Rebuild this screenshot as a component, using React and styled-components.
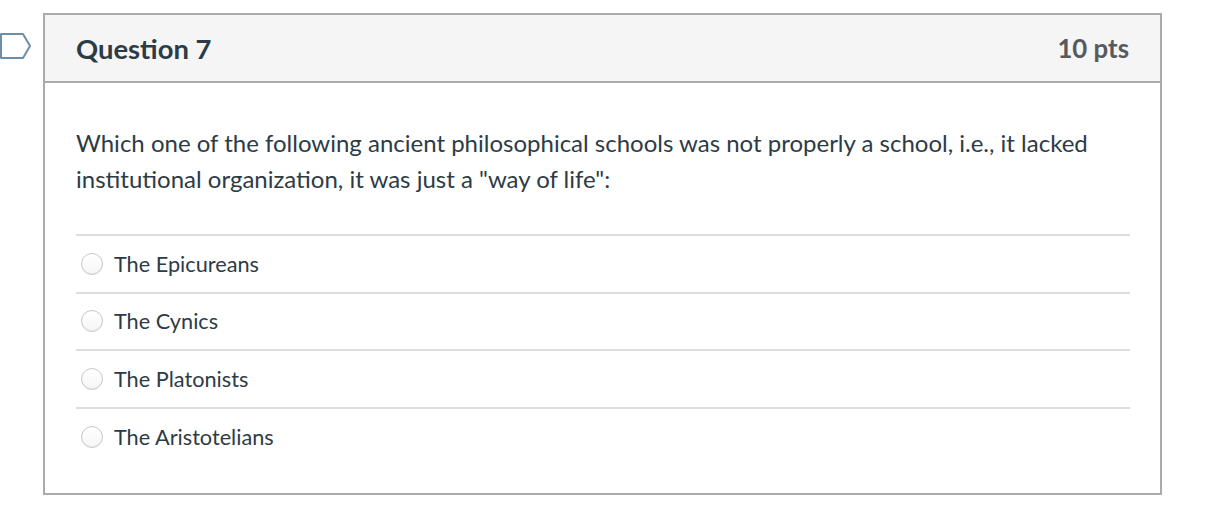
import React from "react";
import styled, { createGlobalStyle } from "styled-components";

const GlobalStyle = createGlobalStyle`
  body {
    margin: 0;
    background: #fff;
    font-family: Lato, "Open Sans", "Liberation Sans", sans-serif;
    color: #2d3b45;
  }
`;

const Page = styled.div`
  display: flex;
  align-items: flex-start;
  padding-top: 13px;
  width: 1220px;
`;

const Marker = styled.div`
  width: 43px;
  flex: 0 0 43px;
  padding-top: 20px;
  svg {
    display: block;
  }
`;

const Card = styled.div`
  width: 1115px;
  border: 2px solid #aaaaaa;
`;

const Header = styled.div`
  display: flex;
  align-items: center;
  justify-content: space-between;
  height: 66px;
  padding: 0 31px;
  background: #f5f5f5;
  border-bottom: 2px solid #aaaaaa;
`;

const Title = styled.h2`
  margin: 0;
  font-size: 27.4px;
  font-weight: 700;
  color: #2d3b45;
`;

const Points = styled.span`
  font-size: 25.8px;
  font-weight: 700;
  color: #555a5e;
`;

const Body = styled.div`
  padding: 42px 30px 29px 31px;
`;

const QuestionText = styled.p`
  margin: 0 0 37px;
  font-size: 24px;
  line-height: 36px;
`;

const Answers = styled.div`
  display: flex;
  flex-direction: column;
`;

const Answer = styled.label`
  display: flex;
  align-items: center;
  height: 55.6px;
  border-top: 2px solid #dddddd;
  padding-left: 5px;
  font-size: 21.7px;
  cursor: pointer;
`;

const Radio = styled.span`
  width: 20px;
  height: 20px;
  border-radius: 50%;
  border: 1px solid #c4c9cc;
  background: linear-gradient(#ffffff, #f6f6f6);
  box-shadow: inset 0 -1px 1px rgba(0, 0, 0, 0.05);
  margin-right: 11px;
  flex: 0 0 auto;
`;

const answers = [
  "The Epicureans",
  "The Cynics",
  "The Platonists",
  "The Aristotelians",
];

export default function App() {
  return (
    <>
      <GlobalStyle />
      <Page>
        <Marker>
          <svg width="32" height="26" viewBox="0 0 32 26">
            <path
              d="M1 1 H23 L30 13 L23 25 H1 Z"
              fill="#fff"
              stroke="#6b8eaa"
              strokeWidth="2"
              strokeLinejoin="round"
            />
          </svg>
        </Marker>
        <Card>
          <Header>
            <Title>Question 7</Title>
            <Points>10 pts</Points>
          </Header>
          <Body>
            <QuestionText>
              Which one of the following ancient philosophical schools was not
              properly a school, i.e., it lacked institutional organization, it
              was just a "way of life":
            </QuestionText>
            <Answers>
              {answers.map((a) => (
                <Answer key={a}>
                  <Radio />
                  {a}
                </Answer>
              ))}
            </Answers>
          </Body>
        </Card>
      </Page>
    </>
  );
}
